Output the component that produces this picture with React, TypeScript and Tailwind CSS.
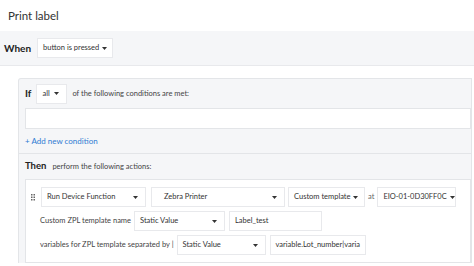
import React from "react";

const font = { fontFamily: 'Lato, "Open Sans", sans-serif' };

function Caret() {
  return (
    <svg width="5" height="3" viewBox="0 0 5 3" className="shrink-0">
      <path d="M0 0h5L2.5 3z" fill="#333" />
    </svg>
  );
}

function Select({
  label,
  className = "",
  spread = false,
}: {
  label: string;
  className?: string;
  spread?: boolean;
}) {
  return (
    <div
      className={`flex h-[20px] shrink-0 items-center gap-[3px] border border-[#e8e9ec] bg-white px-[5px] text-[7.5px] text-[#333] ${
        spread ? "justify-between" : ""
      } ${className}`}
    >
      <span className="whitespace-nowrap">{label}</span>
      <span className={spread ? "pr-[2px]" : ""}>
        <Caret />
      </span>
    </div>
  );
}

function Field({ value, className = "" }: { value: string; className?: string }) {
  return (
    <div
      className={`flex h-[20px] shrink-0 items-center overflow-hidden border border-[#e8e9ec] bg-white px-[5px] text-[7.5px] whitespace-nowrap text-[#333] ${className}`}
    >
      {value}
    </div>
  );
}

function DragHandle() {
  return (
    <svg width="4" height="7" viewBox="0 0 4 7" className="shrink-0">
      {[0, 2.5, 5].map((y) => (
        <g key={y}>
          <rect x="0" y={y} width="1.5" height="1.5" fill="#666" />
          <rect x="2.5" y={y} width="1.5" height="1.5" fill="#666" />
        </g>
      ))}
    </svg>
  );
}

export default function App() {
  return (
    <div className="h-[266px] w-[474px] overflow-hidden bg-white" style={font}>
      <div className="flex h-[31px] items-center px-[8px] text-[11.5px] text-[#333]">
        Print label
      </div>

      <div className="flex h-[35px] items-center gap-[6px] border-b border-[#e8e9ec] bg-[#f5f6f8] px-[4px]">
        <span className="text-[10px] font-bold text-[#222]">When</span>
        <Select label="button is pressed" className="h-[19px] w-[76px]" />
      </div>

      <div className="pt-[12px] pr-[2px] pl-[18px]">
        <div className="rounded-tl-[3px] border-t border-r border-l border-[#e3e5e8] bg-[#f5f6f8]">
          <div className="pl-[6px]">
            <div className="flex h-[29px] items-center gap-[5px]">
              <span className="text-[10px] font-bold text-[#222]">If</span>
              <Select label="all" spread className="h-[19px] w-[31px]" />
              <span className="text-[7.5px] text-[#444]">
                of the following conditions are met:
              </span>
            </div>
            <div className="h-[21px] border border-[#e3e5e8] bg-white" />
            <div className="flex h-[24px] items-center text-[8px] text-[#2f7bd3]">
              + Add new condition
            </div>
          </div>

          <div className="border-t border-[#e3e5e8] pl-[6px]">
            <div className="flex h-[25px] items-center gap-[6px]">
              <span className="text-[9.5px] font-bold text-[#222]">Then</span>
              <span className="text-[7.5px] text-[#444]">
                perform the following actions:
              </span>
            </div>
            <div className="flex h-[84px] flex-col gap-[4px] border border-[#e3e5e8] bg-white pt-[7px] pl-[5px]">
              <div className="flex items-center">
                <DragHandle />
                <Select label="Run Device Function" spread className="ml-[6px] w-[105px]" />
                <Select label="Zebra Printer" spread className="ml-[5px] w-[134px] pl-[12px]" />
                <Select label="Custom template" className="ml-[3px] w-[77px]" />
                <span className="ml-[3px] text-[7.5px] text-[#666]">at</span>
                <Select label="EIO-01-0D30FF0C" className="ml-[3px] w-[79px]" />
              </div>
              <div className="flex items-center gap-[3px] pl-[9px]">
                <span className="text-[7.5px] whitespace-nowrap text-[#444]">
                  Custom ZPL template name
                </span>
                <Select label="Static Value" spread className="w-[91px]" />
                <Field value="Label_test" className="ml-[1px] w-[93px]" />
              </div>
              <div className="flex items-center gap-[3px] pl-[9px]">
                <span className="text-[7.5px] whitespace-nowrap text-[#444]">
                  variables for ZPL template separated by |
                </span>
                <Select label="Static Value" spread className="w-[89px]" />
                <Field value="variable.Lot_number|varia" className="ml-[1px] w-[96px]" />
              </div>
            </div>
          </div>
        </div>
      </div>
    </div>
  );
}
